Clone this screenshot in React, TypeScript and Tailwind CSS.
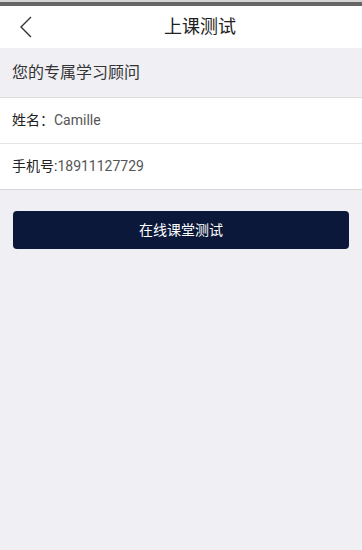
export default function App() {
  return (
    <div
      className="w-[362px] h-[550px] bg-[#efeff4] flex flex-col overflow-hidden"
      style={{ fontFamily: 'Roboto, "Noto Sans CJK SC", sans-serif' }}
    >
      {/* status strip */}
      <div className="h-[2px] bg-[#d4d4d4]" />
      <div className="h-[4px] bg-[#666666]" />

      {/* header */}
      <div className="h-[42px] bg-white flex items-center relative">
        <svg
          className="absolute left-[19px] top-[10px]"
          width="14"
          height="22"
          viewBox="0 0 14 22"
          fill="none"
        >
          <path d="M12 1 L2 11 L12 21" stroke="#333" strokeWidth="1.4" />
        </svg>
        <h1 className="w-full pl-[38px] text-center text-[18px] text-[#222] leading-none">上课测试</h1>
      </div>

      {/* section title */}
      <div className="h-[50px] flex items-center px-3 border-b border-[#dcdcdc]">
        <span className="text-[16px] text-[#333]">您的专属学习顾问</span>
      </div>

      <div className="bg-white">
        <div className="h-[46px] flex items-center px-3 border-b border-[#e5e5e5]">
          <span className="text-[14px] text-[#222]">姓名：</span>
          <span className="text-[14px] text-[#555]">Camille</span>
        </div>
        <div className="h-[46px] flex items-center px-3 border-b border-[#d6d6d6]">
          <span className="text-[14px] text-[#222]">手机号:</span>
          <span className="text-[14px] text-[#555]">18911127729</span>
        </div>
      </div>

      <div className="px-[13px] pt-[21px]">
        <button className="w-full h-[38px] rounded-[4px] bg-[#0b1839] text-white text-[14px]">
          在线课堂测试
        </button>
      </div>
    </div>
  )
}
